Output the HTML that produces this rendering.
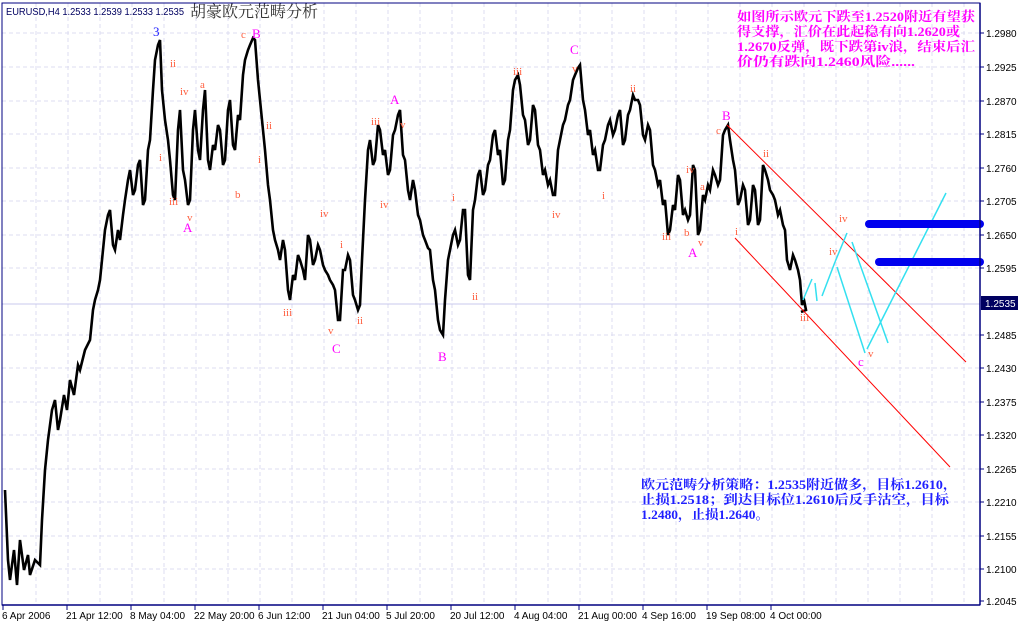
<!DOCTYPE html>
<html><head><meta charset="utf-8"><style>
html,body{margin:0;padding:0;background:#fff;width:1024px;height:626px;overflow:hidden}
svg{display:block}
.ax{font-family:"Liberation Sans","DejaVu Sans",sans-serif;font-size:10px;fill:#000}
.o{font-family:"Liberation Serif",serif;font-size:11px;fill:#ff6040}
.m{font-family:"Liberation Serif",serif;font-size:13px;fill:#ff00ff}
</style></head><body>
<svg width="1024" height="626" viewBox="0 0 1024 626" xmlns="http://www.w3.org/2000/svg">
<rect x="0" y="0" width="1024" height="626" fill="#fff"/>
<g stroke="#dcdcf0" stroke-width="1" stroke-dasharray="4,3">
<line x1="36" y1="3" x2="36" y2="605"/><line x1="68" y1="3" x2="68" y2="605"/><line x1="100" y1="3" x2="100" y2="605"/><line x1="132" y1="3" x2="132" y2="605"/><line x1="164" y1="3" x2="164" y2="605"/><line x1="196" y1="3" x2="196" y2="605"/><line x1="228" y1="3" x2="228" y2="605"/><line x1="260" y1="3" x2="260" y2="605"/><line x1="292" y1="3" x2="292" y2="605"/><line x1="324" y1="3" x2="324" y2="605"/><line x1="356" y1="3" x2="356" y2="605"/><line x1="388" y1="3" x2="388" y2="605"/><line x1="420" y1="3" x2="420" y2="605"/><line x1="452" y1="3" x2="452" y2="605"/><line x1="484" y1="3" x2="484" y2="605"/><line x1="516" y1="3" x2="516" y2="605"/><line x1="548" y1="3" x2="548" y2="605"/><line x1="580" y1="3" x2="580" y2="605"/><line x1="612" y1="3" x2="612" y2="605"/><line x1="644" y1="3" x2="644" y2="605"/><line x1="676" y1="3" x2="676" y2="605"/><line x1="708" y1="3" x2="708" y2="605"/><line x1="740" y1="3" x2="740" y2="605"/><line x1="772" y1="3" x2="772" y2="605"/><line x1="804" y1="3" x2="804" y2="605"/><line x1="836" y1="3" x2="836" y2="605"/><line x1="868" y1="3" x2="868" y2="605"/><line x1="900" y1="3" x2="900" y2="605"/><line x1="932" y1="3" x2="932" y2="605"/><line x1="964" y1="3" x2="964" y2="605"/>
<line x1="2" y1="33" x2="980" y2="33"/><line x1="2" y1="67" x2="980" y2="67"/><line x1="2" y1="101" x2="980" y2="101"/><line x1="2" y1="134" x2="980" y2="134"/><line x1="2" y1="168" x2="980" y2="168"/><line x1="2" y1="201" x2="980" y2="201"/><line x1="2" y1="235" x2="980" y2="235"/><line x1="2" y1="268" x2="980" y2="268"/><line x1="2" y1="335" x2="980" y2="335"/><line x1="2" y1="368" x2="980" y2="368"/><line x1="2" y1="402" x2="980" y2="402"/><line x1="2" y1="435" x2="980" y2="435"/><line x1="2" y1="469" x2="980" y2="469"/><line x1="2" y1="502" x2="980" y2="502"/><line x1="2" y1="536" x2="980" y2="536"/><line x1="2" y1="569" x2="980" y2="569"/>
</g>
<line x1="2" y1="304" x2="980" y2="304" stroke="#c8c8ec"/>
<polyline fill="none" stroke="#000" stroke-width="2.6" stroke-linejoin="miter" points="5,490 8,560 10,580 14,550 17,585 20,540 24,570 28,555 30,575 35,560 40,565 42,520 45,470 48,440 52,410 55,400 58,430 60,420 64,395 67,410 70,380 74,395 78,365 80,370 85,350 90,340 93,310 95,300 98,290 100,280 103,250 105,230 108,215 110,210 113,245 115,250 118,230 120,240 123,215 125,200 128,180 130,170 133,195 135,190 138,165 140,160 143,205 145,200 148,150 150,140 153,90 155,60 158,45 160,40 162,90 165,120 168,140 170,160 173,195 175,200 178,130 180,110 183,170 185,180 188,205 190,200 193,130 195,110 198,150 200,160 203,110 205,90 208,160 210,170 213,145 215,150 218,125 220,130 223,165 225,160 228,110 230,100 233,145 235,150 238,115 240,120 243,75 245,60 248,50 250,45 253,38 255,40 258,80 260,100 263,130 265,150 268,185 270,200 273,230 275,240 278,250 280,260 283,240 285,250 288,290 290,300 293,275 295,280 298,255 300,260 303,270 305,280 308,235 310,240 313,265 315,260 318,245 320,250 323,265 325,270 328,275 330,280 333,285 335,290 338,320 340,320 343,270 345,270 348,255 350,260 353,295 355,300 358,310 360,305 362,260 365,200 368,150 370,140 373,165 375,160 378,125 380,130 383,155 385,150 388,175 390,170 393,135 395,130 398,115 400,110 403,155 405,160 408,190 410,200 413,180 415,190 418,215 420,220 423,235 425,240 428,248 430,250 433,280 435,290 438,320 440,330 443,335 445,300 448,260 450,250 453,235 455,230 458,245 460,240 463,210 465,210 468,275 470,280 473,210 475,200 478,175 480,170 483,195 485,190 488,165 490,160 493,135 495,130 498,155 500,150 503,185 505,180 508,140 510,130 513,90 515,80 518,75 520,85 523,115 525,120 528,145 530,140 533,105 535,110 538,145 540,150 543,175 545,170 548,185 550,180 553,195 555,195 558,150 560,140 563,125 565,120 568,105 570,100 573,80 575,75 578,68 580,65 583,100 585,110 588,135 590,130 593,155 595,150 598,170 600,170 603,145 605,140 608,125 610,120 613,135 615,130 618,115 620,110 623,145 625,140 628,115 630,110 633,95 635,100 638,100 640,105 643,135 645,140 648,125 650,130 653,165 655,170 658,185 660,180 663,205 665,200 668,235 670,230 673,205 675,210 678,175 680,180 683,215 685,210 688,220 690,215 693,165 695,170 698,235 700,230 703,195 705,200 708,185 710,190 713,170 715,175 718,185 720,180 723,135 725,130 728,125 730,140 733,160 735,170 738,205 740,200 743,185 745,190 748,225 750,220 753,185 755,190 758,225 760,220 763,165 765,170 768,180 770,190 773,195 775,200 778,215 780,210 783,225 785,230 787,260 790,270 793,255 795,260 798,270 800,280 802,305 804,300 806,310 801,312"/>
<line x1="727" y1="125" x2="966" y2="362" stroke="#ff0000" stroke-width="1"/>
<line x1="735" y1="238" x2="950" y2="467" stroke="#ff0000" stroke-width="1"/>
<g stroke="#33e0f0" stroke-width="1.5" fill="none">
<line x1="803" y1="300" x2="812" y2="279"/><line x1="815" y1="283" x2="817" y2="301"/><line x1="822" y1="296" x2="835" y2="262"/><line x1="835" y1="262" x2="847" y2="233"/><line x1="837" y1="267" x2="865" y2="353"/><line x1="852" y1="242" x2="888" y2="343"/><line x1="867" y1="349" x2="946" y2="193"/>
</g>
<line x1="869" y1="224" x2="980" y2="224" stroke="#0000ee" stroke-width="8" stroke-linecap="round"/>
<line x1="879" y1="262" x2="980" y2="262" stroke="#0000ee" stroke-width="8" stroke-linecap="round"/>
<text x="153" y="36" font-family="Liberation Serif,serif" font-size="13" fill="#2020ff">3</text>
<text class="m" x="183" y="232">A</text><text class="m" x="252" y="38">B</text>
<text class="m" x="390" y="104">A</text><text class="m" x="332" y="353">C</text><text class="m" x="438" y="361">B</text>
<text class="m" x="570" y="54">C</text><text class="m" x="722" y="120">B</text><text class="m" x="688" y="257">A</text><text class="m" x="858" y="366">c</text>
<g class="o">
<text x="170" y="67">ii</text><text x="180" y="95">iv</text><text x="200" y="88">a</text><text x="241" y="38">c</text><text x="159" y="161">i</text>
<text x="169" y="205">iii</text><text x="187" y="221">v</text><text x="235" y="198">b</text><text x="258" y="163">i</text><text x="266" y="129">ii</text>
<text x="283" y="316">iii</text><text x="320" y="217">iv</text><text x="340" y="248">i</text><text x="328" y="334">v</text><text x="357" y="324">ii</text>
<text x="371" y="125">iii</text><text x="400" y="128">v</text><text x="380" y="208">iv</text><text x="452" y="201">i</text><text x="472" y="300">ii</text>
<text x="513" y="75">iii</text><text x="572" y="72">v</text><text x="552" y="218">iv</text><text x="602" y="199">i</text><text x="630" y="92">ii</text>
<text x="662" y="240">iii</text><text x="686" y="173">iv</text><text x="700" y="190">a</text><text x="684" y="236">b</text><text x="698" y="246">v</text>
<text x="716" y="134">c</text><text x="763" y="157">ii</text><text x="735" y="235">i</text><text x="800" y="321">iii</text>
<text x="839" y="222">iv</text><text x="829" y="255">iv</text><text x="868" y="357">v</text>
</g>
<rect x="2" y="3" width="978" height="602" fill="none" stroke="#000080" stroke-width="1"/>
<line x1="980" y1="3" x2="980" y2="605" stroke="#000080" stroke-width="1.5"/>
<line x1="2" y1="605" x2="980" y2="605" stroke="#000080" stroke-width="1.5"/>
<g stroke="#000080">
<line x1="980" y1="33" x2="984" y2="33"/><line x1="980" y1="67" x2="984" y2="67"/><line x1="980" y1="101" x2="984" y2="101"/><line x1="980" y1="134" x2="984" y2="134"/><line x1="980" y1="168" x2="984" y2="168"/><line x1="980" y1="201" x2="984" y2="201"/><line x1="980" y1="235" x2="984" y2="235"/><line x1="980" y1="268" x2="984" y2="268"/><line x1="980" y1="335" x2="984" y2="335"/><line x1="980" y1="368" x2="984" y2="368"/><line x1="980" y1="402" x2="984" y2="402"/><line x1="980" y1="435" x2="984" y2="435"/><line x1="980" y1="469" x2="984" y2="469"/><line x1="980" y1="502" x2="984" y2="502"/><line x1="980" y1="536" x2="984" y2="536"/><line x1="980" y1="569" x2="984" y2="569"/><line x1="980" y1="601" x2="984" y2="601"/>
<line x1="3" y1="605" x2="3" y2="610"/><line x1="67" y1="605" x2="67" y2="610"/><line x1="131" y1="605" x2="131" y2="610"/><line x1="195" y1="605" x2="195" y2="610"/><line x1="259" y1="605" x2="259" y2="610"/><line x1="323" y1="605" x2="323" y2="610"/><line x1="387" y1="605" x2="387" y2="610"/><line x1="451" y1="605" x2="451" y2="610"/><line x1="515" y1="605" x2="515" y2="610"/><line x1="579" y1="605" x2="579" y2="610"/><line x1="643" y1="605" x2="643" y2="610"/><line x1="707" y1="605" x2="707" y2="610"/><line x1="771" y1="605" x2="771" y2="610"/>
</g>
<g class="ax">
<text x="986" y="37">1.2980</text><text x="986" y="71">1.2925</text><text x="986" y="105">1.2870</text><text x="986" y="138">1.2815</text><text x="986" y="172">1.2760</text><text x="986" y="205">1.2705</text><text x="986" y="239">1.2650</text><text x="986" y="272">1.2595</text><text x="986" y="339">1.2485</text><text x="986" y="372">1.2430</text><text x="986" y="406">1.2375</text><text x="986" y="439">1.2320</text><text x="986" y="473">1.2265</text><text x="986" y="506">1.2210</text><text x="986" y="540">1.2155</text><text x="986" y="573">1.2100</text><text x="986" y="605">1.2045</text>
<text x="2" y="619">6 Apr 2006</text><text x="66" y="619">21 Apr 12:00</text><text x="130" y="619">8 May 04:00</text><text x="194" y="619">22 May 20:00</text><text x="258" y="619">6 Jun 12:00</text><text x="322" y="619">21 Jun 04:00</text><text x="386" y="619">5 Jul 20:00</text><text x="450" y="619">20 Jul 12:00</text><text x="514" y="619">4 Aug 04:00</text><text x="578" y="619">21 Aug 00:00</text><text x="642" y="619">4 Sep 16:00</text><text x="706" y="619">19 Sep 08:00</text><text x="770" y="619">4 Oct 00:00</text>
</g>
<rect x="981" y="296" width="37" height="14" fill="#000060"/>
<text x="985" y="307" font-family="Liberation Sans,sans-serif" font-size="10" fill="#fff">1.2535</text>
<text x="6" y="15" font-family="Liberation Sans,sans-serif" font-size="10" fill="#000060" textLength="178" lengthAdjust="spacingAndGlyphs">EURUSD,H4  1.2533 1.2539 1.2533 1.2535</text>
<text x="190" y="17" font-family="Liberation Serif,'Noto Serif CJK SC',serif" font-size="16" fill="#333" textLength="128">胡豪欧元范畴分析</text>
<g font-family="Liberation Serif,'Noto Serif CJK SC',serif" font-size="13" fill="#ff00ff" font-weight="bold" lengthAdjust="spacingAndGlyphs">
<text x="737" y="21" textLength="238" lengthAdjust="spacingAndGlyphs">如图所示欧元下跌至1.2520附近有望获</text>
<text x="737" y="36" textLength="223" lengthAdjust="spacingAndGlyphs">得支撑，汇价在此起稳有向1.2620或</text>
<text x="737" y="51" textLength="238" lengthAdjust="spacingAndGlyphs">1.2670反弹，既下跌第iv浪，结束后汇</text>
<text x="737" y="66" textLength="178" lengthAdjust="spacingAndGlyphs">价仍有跌向1.2460风险......</text>
</g>
<g font-family="Liberation Serif,'Noto Serif CJK SC',serif" font-size="13" fill="#2020ff" font-weight="bold">
<text x="641" y="489" textLength="316" lengthAdjust="spacingAndGlyphs">欧元范畴分析策略：1.2535附近做多，目标1.2610，</text>
<text x="641" y="504" textLength="308" lengthAdjust="spacingAndGlyphs">止损1.2518；到达目标位1.2610后反手沽空，目标</text>
<text x="641" y="519" textLength="128" lengthAdjust="spacingAndGlyphs">1.2480，止损1.2640。</text>
</g>
</svg>
</body></html>
